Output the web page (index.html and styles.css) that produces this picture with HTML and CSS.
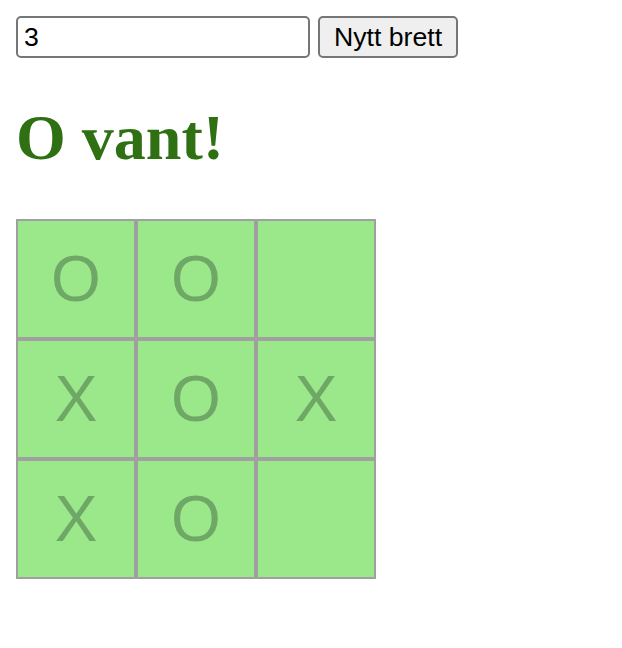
FILE: index.html
```html
<!DOCTYPE html>
<html lang="no">
<head>
<meta charset="utf-8">
<title>Tre på rad</title>
<link rel="stylesheet" href="styles.css">
</head>
<body>
<div class="controls">
  <input class="size-input" type="text" value="3">
  <button class="new-board">Nytt brett</button>
</div>
<h1 class="status">O vant!</h1>
<div class="board">
  <div class="cell">O</div>
  <div class="cell">O</div>
  <div class="cell"></div>
  <div class="cell">X</div>
  <div class="cell">O</div>
  <div class="cell">X</div>
  <div class="cell">X</div>
  <div class="cell">O</div>
  <div class="cell"></div>
</div>
</body>
</html>
```
FILE: styles.css
```css
html, body {
  background: #ffffff;
}
body {
  margin: 16px;
  font-family: "Liberation Serif", serif;
}
.controls {
  display: flex;
  gap: 8px;
  align-items: flex-start;
}
.size-input {
  box-sizing: border-box;
  width: 294px;
  height: 42px;
  margin: 0;
  padding: 2px 6px;
  border: 2px solid #767676;
  border-radius: 5px;
  background: #ffffff;
  font-family: "Liberation Sans", Arial, sans-serif;
  font-size: 26.67px;
  color: #000000;
}
.new-board {
  box-sizing: border-box;
  width: 140px;
  height: 42px;
  margin: 0;
  padding: 2px 12px;
  border: 2px solid #767676;
  border-radius: 5px;
  background: #efefef;
  font-family: "Liberation Sans", Arial, sans-serif;
  font-size: 26.67px;
  color: #000000;
}
.status {
  margin: 42.88px 0 44px;
  font-family: "Liberation Serif", "Times New Roman", serif;
  font-size: 64px;
  font-weight: bold;
  color: #2e7012;
}
.board {
  display: grid;
  grid-template-columns: repeat(3, 120px);
  grid-template-rows: repeat(3, 120px);
  width: 360px;
}
.cell {
  box-sizing: border-box;
  border: 2px solid #a0a0a0;
  background: #9ae88a;
  display: flex;
  align-items: center;
  justify-content: center;
  font-family: "Liberation Sans", Arial, sans-serif;
  font-size: 64px;
  color: #6fa866;
}
```
